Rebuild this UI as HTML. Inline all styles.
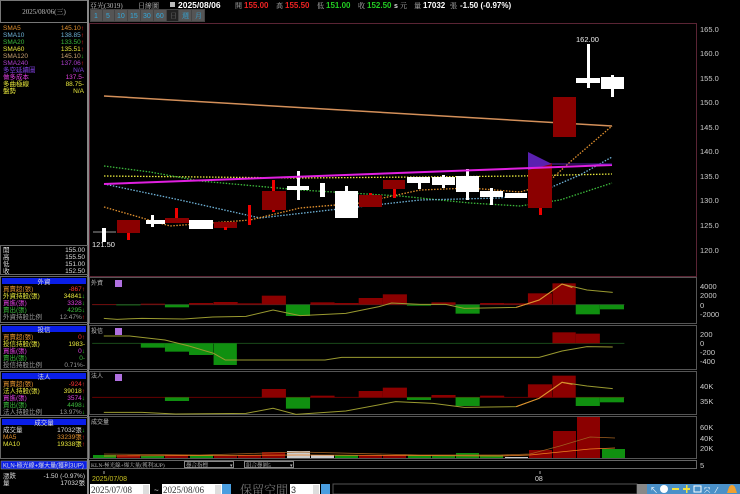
<!DOCTYPE html>
<html><head><meta charset="utf-8"><style>
html,body{margin:0;padding:0;background:#000;width:740px;height:494px;overflow:hidden}
svg{display:block}
text{font-family:"Liberation Sans","Noto Sans CJK TC",sans-serif}
.s{font-family:"Liberation Serif","Noto Serif CJK SC",serif}
</style></head><body>
<svg width="740" height="494" viewBox="0 0 740 494" xmlns="http://www.w3.org/2000/svg">
<rect width="740" height="494" fill="#000"/>
<rect x="0.5" y="0.5" width="87" height="22" fill="#000" stroke="#777"/>
<text x="44" y="14" fill="#bbb" font-size="7" text-anchor="middle" class="s">2025/08/06(三)</text>
<line x1="88" y1="0" x2="88" y2="494" stroke="#888" stroke-width="2"/>
<g font-size="6.5" class="s">
<text x="3" y="30" fill="#e0902e">SMA5</text><text x="84" y="30" fill="#e0902e" text-anchor="end">145.10<tspan fill="#f22">↑</tspan></text>
<text x="3" y="37" fill="#6fb3d8">SMA10</text><text x="84" y="37" fill="#6fb3d8" text-anchor="end">138.85<tspan fill="#f22">↑</tspan></text>
<text x="3" y="44" fill="#3cba3c">SMA20</text><text x="84" y="44" fill="#3cba3c" text-anchor="end">133.50<tspan fill="#f22">↑</tspan></text>
<text x="3" y="51" fill="#e8e83c">SMA60</text><text x="84" y="51" fill="#e8e83c" text-anchor="end">135.51<tspan fill="#f22">↑</tspan></text>
<text x="3" y="58" fill="#c8a070">SMA120</text><text x="84" y="58" fill="#c8a070" text-anchor="end">145.10<tspan fill="#2c2">↓</tspan></text>
<text x="3" y="65" fill="#b040d0">SMA240</text><text x="84" y="65" fill="#b040d0" text-anchor="end">137.06<tspan fill="#f22">↑</tspan></text>
<text x="3" y="72" fill="#8040e0">多空延續圖</text><text x="84" y="72" fill="#8040e0" text-anchor="end">N/A</text>
<text x="3" y="79" fill="#e040e0">做多成本</text><text x="84" y="79" fill="#e040e0" text-anchor="end">137.5-</text>
<text x="3" y="86" fill="#e8e83c">多曲極線</text><text x="84" y="86" fill="#e8e83c" text-anchor="end">88.75-</text>
<text x="3" y="93" fill="#e8e83c">盤勢</text><text x="84" y="93" fill="#e8e83c" text-anchor="end">N/A</text>
</g>
<rect x="0.5" y="245.5" width="87" height="29" fill="none" stroke="#666"/>
<g font-size="6.5" class="s" fill="#ddd">
<text x="3" y="252">開</text><text x="85" y="252" text-anchor="end">155.00</text>
<text x="3" y="259">高</text><text x="85" y="259" text-anchor="end">155.50</text>
<text x="3" y="266">低</text><text x="85" y="266" text-anchor="end">151.00</text>
<text x="3" y="273">收</text><text x="85" y="273" text-anchor="end">152.50</text>
</g>
<g class="s" font-size="6.5">
<rect x="0.5" y="276.5" width="87" height="46" fill="none" stroke="#666"/>
<rect x="2" y="278" width="84" height="6" fill="#0a1ee8"/><text x="44" y="284" fill="#ddd" text-anchor="middle">外資</text>
<text x="3" y="291" fill="#e0902e">買賣超(張)</text><text x="85" y="291" fill="#f33" text-anchor="end">-867↑</text>
<text x="3" y="298" fill="#e8e83c">外資持股(張)</text><text x="85" y="298" fill="#e8e83c" text-anchor="end">34841<tspan fill="#2c2">↓</tspan></text>
<text x="3" y="305" fill="#e040e0">買進(張)</text><text x="85" y="305" fill="#e040e0" text-anchor="end">3328<tspan fill="#2c2">↓</tspan></text>
<text x="3" y="312" fill="#3cba3c">賣出(張)</text><text x="85" y="312" fill="#3cba3c" text-anchor="end">4295<tspan fill="#2c2">↓</tspan></text>
<text x="3" y="319" fill="#999">外資持股比例</text><text x="85" y="319" fill="#999" text-anchor="end">12.47%<tspan fill="#f22">↑</tspan></text>

<rect x="0.5" y="324.5" width="87" height="45" fill="none" stroke="#666"/>
<rect x="2" y="326" width="84" height="6" fill="#0a1ee8"/><text x="44" y="332" fill="#ddd" text-anchor="middle">投信</text>
<text x="3" y="339" fill="#e0902e">買賣超(張)</text><text x="85" y="339" fill="#f33" text-anchor="end">0↑</text>
<text x="3" y="346" fill="#e8e83c">投信持股(張)</text><text x="85" y="346" fill="#e8e83c" text-anchor="end">1983-</text>
<text x="3" y="353" fill="#e040e0">買進(張)</text><text x="85" y="353" fill="#e040e0" text-anchor="end">0<tspan fill="#2c2">↓</tspan></text>
<text x="3" y="360" fill="#3cba3c">賣出(張)</text><text x="85" y="360" fill="#3cba3c" text-anchor="end">0-</text>
<text x="3" y="367" fill="#999">投信持股比例</text><text x="85" y="367" fill="#999" text-anchor="end">0.71%-</text>

<rect x="0.5" y="371.5" width="87" height="44" fill="none" stroke="#666"/>
<rect x="2" y="373" width="84" height="6" fill="#0a1ee8"/><text x="44" y="379" fill="#ddd" text-anchor="middle">法人</text>
<text x="3" y="386" fill="#e0902e">買賣超(張)</text><text x="85" y="386" fill="#f33" text-anchor="end">-924↑</text>
<text x="3" y="393" fill="#e8e83c">法人持股(張)</text><text x="85" y="393" fill="#e8e83c" text-anchor="end">39018<tspan fill="#f22">↑</tspan></text>
<text x="3" y="400" fill="#e040e0">買進(張)</text><text x="85" y="400" fill="#e040e0" text-anchor="end">3574<tspan fill="#2c2">↓</tspan></text>
<text x="3" y="407" fill="#3cba3c">賣出(張)</text><text x="85" y="407" fill="#3cba3c" text-anchor="end">4498<tspan fill="#2c2">↓</tspan></text>
<text x="3" y="414" fill="#999">法人持股比例</text><text x="85" y="414" fill="#999" text-anchor="end">13.97%<tspan fill="#2c2">↓</tspan></text>

<rect x="0.5" y="417.5" width="87" height="41" fill="none" stroke="#666"/>
<rect x="2" y="419" width="84" height="6" fill="#0a1ee8"/><text x="44" y="425" fill="#ddd" text-anchor="middle">成交量</text>
<text x="3" y="432" fill="#ddd">成交量</text><text x="85" y="432" fill="#ddd" text-anchor="end">17032張<tspan fill="#2c2">↓</tspan></text>
<text x="3" y="439" fill="#e0902e">MA5</text><text x="85" y="439" fill="#e0902e" text-anchor="end">33239張<tspan fill="#f22">↑</tspan></text>
<text x="3" y="446" fill="#e8e83c">MA10</text><text x="85" y="446" fill="#e8e83c" text-anchor="end">19338張<tspan fill="#f22">↑</tspan></text>

<rect x="1" y="461" width="86" height="8" fill="#0a1ee8" stroke="#888" stroke-width="0.6"/>
<text x="3" y="467.5" fill="#ddd" font-size="6">KLN-極光線+爆大量(獲利3UP)</text>
<text x="3" y="478" fill="#ddd">漲跌</text><text x="85" y="478" fill="#ddd" text-anchor="end">-1.50 (-0.97%)</text>
<text x="3" y="485" fill="#ddd">量</text><text x="85" y="485" fill="#ddd" text-anchor="end">17032張</text>
</g>

<g font-size="7">
<text x="90" y="8" fill="#bbb" class="s">亞光(3019)</text>
<text x="138" y="8" fill="#bbb" class="s">日線圖</text>
<rect x="170" y="2" width="5" height="5" fill="#bbb"/>
<text x="178" y="8" fill="#fff" font-weight="bold" font-size="8.5">2025/08/06</text>
<text x="235" y="8" fill="#bbb" class="s">開</text><text x="244" y="8" fill="#e22" font-weight="bold" font-size="8">155.00</text>
<text x="276" y="8" fill="#bbb" class="s">高</text><text x="285" y="8" fill="#e22" font-weight="bold" font-size="8">155.50</text>
<text x="317" y="8" fill="#bbb" class="s">低</text><text x="326" y="8" fill="#2c2" font-weight="bold" font-size="8">151.00</text>
<text x="358" y="8" fill="#bbb" class="s">收</text><text x="367" y="8" fill="#2c2" font-weight="bold" font-size="8">152.50</text>
<text x="394" y="8" fill="#ddd" font-weight="bold">s</text><text x="400" y="8" fill="#bbb" class="s">元</text>
<text x="414" y="8" fill="#bbb" class="s">量</text><text x="423" y="8" fill="#fff" font-weight="bold" font-size="8">17032</text><text x="450" y="8" fill="#bbb" class="s">張</text>
<text x="460" y="8" fill="#fff" font-weight="bold" font-size="8">-1.50 (-0.97%)</text>
</g>
<g font-size="7" fill="#3ad">
<rect x="90" y="9" width="115" height="13" fill="#444"/>
<rect x="91" y="10" width="11" height="11" fill="#555"/><text x="94" y="18">1</text>
<rect x="103" y="10" width="11" height="11" fill="#555"/><text x="106" y="18">5</text>
<rect x="115" y="10" width="12" height="11" fill="#555"/><text x="117" y="18">10</text>
<rect x="128" y="10" width="12" height="11" fill="#555"/><text x="130" y="18">15</text>
<rect x="141" y="10" width="12" height="11" fill="#555"/><text x="143" y="18">30</text>
<rect x="154" y="10" width="12" height="11" fill="#555"/><text x="156" y="18">60</text>
<rect x="167" y="10" width="11" height="11" fill="#222"/><text x="170" y="18" fill="#666" class="s">日</text>
<rect x="179" y="10" width="12" height="11" fill="#555"/><text x="182" y="18" class="s">週</text>
<rect x="192" y="10" width="12" height="11" fill="#555"/><text x="195" y="18" class="s">月</text>
</g>

<rect x="89.5" y="23.5" width="607" height="253" fill="none" stroke="#5a2434"/>
<g font-size="7.5" fill="#ccc">
<text x="700" y="32">165.0</text><text x="700" y="56">160.0</text><text x="700" y="81">155.0</text><text x="700" y="105">150.0</text><text x="700" y="130">145.0</text><text x="700" y="154">140.0</text><text x="700" y="179">135.0</text><text x="700" y="203">130.0</text><text x="700" y="228">125.0</text><text x="700" y="253">120.0</text>
</g>
<line x1="104" y1="96" x2="612" y2="126" stroke="#d4905a" stroke-width="1.5"/>
<polyline points="104,176 300,178 420,177 520,176 612,174" fill="none" stroke="#e8e83c" stroke-width="1.3" stroke-dasharray="1.5,1.5"/>
<polyline points="104,166 150,172 200,181 300,190 400,196 470,203 520,206 560,200 612,183" fill="none" stroke="#3cba3c" stroke-width="1.3" stroke-dasharray="1.5,1.5"/>
<polyline points="104,184 180,200 260,218 330,210 420,200 500,198 540,192 580,175 612,157" fill="none" stroke="#6fb3d8" stroke-width="1.3" stroke-dasharray="1.5,1.5"/>
<polyline points="104,207 170,226 250,220 300,208 360,203 420,190 470,188 520,192 545,185 570,162 612,126" fill="none" stroke="#e0902e" stroke-width="1.3" stroke-dasharray="1.5,1.5"/>
<g>
<line x1="93" y1="232" x2="116" y2="232" stroke="#999"/>
<rect x="102" y="228" width="4" height="14" fill="#fff"/>
<text x="92" y="247" fill="#eee" font-size="7.5">121.50</text>
<rect x="127" y="232" width="3" height="8" fill="#e00"/><rect x="117" y="220" width="23" height="13" fill="#8b0000"/>
<rect x="151" y="215" width="3" height="12" fill="#fff"/><rect x="146" y="220" width="19" height="4" fill="#fff"/>
<rect x="175" y="208" width="3" height="10" fill="#e00"/><rect x="165" y="218" width="24" height="5" fill="#8b0000"/>
<rect x="189" y="220" width="24" height="9" fill="#fff"/>
<rect x="214" y="222" width="23" height="6" fill="#8b0000"/><rect x="224" y="227" width="3" height="3" fill="#e00"/>
<rect x="248" y="205" width="3" height="20" fill="#e00"/>
<rect x="272" y="180" width="3" height="32" fill="#e00"/><rect x="262" y="191" width="24" height="19" fill="#8b0000"/>
<rect x="297" y="171" width="3" height="29" fill="#fff"/><rect x="287" y="186" width="22" height="4" fill="#fff"/>
<rect x="320" y="183" width="5" height="14" fill="#fff"/>
<rect x="345" y="186" width="3" height="6" fill="#fff"/><rect x="335" y="191" width="23" height="27" fill="#fff"/>
<rect x="369" y="193" width="3" height="4" fill="#e00"/><rect x="359" y="195" width="23" height="12" fill="#8b0000"/>
<rect x="393" y="186" width="3" height="12" fill="#e00"/><rect x="383" y="180" width="22" height="9" fill="#8b0000"/>
<rect x="418" y="183" width="3" height="6" fill="#fff"/><rect x="407" y="177" width="23" height="6" fill="#fff"/>
<rect x="442" y="175" width="3" height="13" fill="#fff"/><rect x="432" y="177" width="23" height="8" fill="#fff"/>
<rect x="466" y="169" width="3" height="31" fill="#fff"/><rect x="456" y="176" width="23" height="16" fill="#fff"/>
<rect x="490" y="188" width="3" height="17" fill="#fff"/><rect x="480" y="191" width="23" height="6" fill="#fff"/>
<rect x="505" y="193" width="22" height="5" fill="#fff"/>
<rect x="539" y="200" width="3" height="15" fill="#e00"/><rect x="528" y="163" width="24" height="45" fill="#8b0000"/>
<polygon points="528,152 552,164 528,170" fill="#5a20b0"/>
<rect x="553" y="97" width="23" height="40" fill="#8b0000"/>
<rect x="587" y="44" width="3" height="44" fill="#fff"/><rect x="576" y="78" width="24" height="5" fill="#fff"/>
<text x="576" y="42" fill="#eee" font-size="7.5">162.00</text>
<rect x="611" y="75" width="3" height="22" fill="#fff"/><rect x="601" y="77" width="23" height="12" fill="#fff"/>
</g>
<line x1="104" y1="184" x2="612" y2="165" stroke="#e020e0" stroke-width="2"/>
<line x1="552" y1="164" x2="612" y2="164" stroke="#5a20b0" stroke-width="1"/>

<g stroke="#555" fill="none">
<rect x="89.5" y="277.5" width="607" height="46"/>
<rect x="89.5" y="325.5" width="607" height="44"/>
<rect x="89.5" y="371.5" width="607" height="43"/>
<rect x="89.5" y="416.5" width="607" height="42"/>
</g>
<g font-size="6" fill="#bbb" class="s">
<text x="91" y="285">外資</text><rect x="115" y="280" width="7" height="7" fill="#b070e0"/>
<text x="91" y="333">投信</text><rect x="115" y="328" width="7" height="7" fill="#b070e0"/>
<text x="91" y="378">法人</text><rect x="115" y="374" width="7" height="7" fill="#b070e0"/>
<text x="91" y="424">成交量</text>
</g>
<g font-size="7.5" fill="#ccc">
<text x="700" y="289">4000</text><text x="700" y="298">2000</text><text x="700" y="308">0</text><text x="700" y="317">-2000</text>
<text x="700" y="337">200</text><text x="700" y="346">0</text><text x="700" y="355">-200</text><text x="700" y="364">-400</text>
<text x="700" y="389">40K</text><text x="700" y="404">35K</text>
<text x="700" y="430">60K</text><text x="700" y="441">40K</text><text x="700" y="451">20K</text>
<text x="700" y="468">5</text>
</g>
<g transform="translate(88,275) scale(0.4158,0.3333)">
<line x1="10" y1="89" x2="1290" y2="89" stroke="#333" vector-effect="non-scaling-stroke"/>
<g fill="#8b0000">
<rect x="10" y="88" width="58" height="2"/><rect x="127" y="86" width="58" height="3"/><rect x="243" y="84" width="58" height="5"/><rect x="302" y="81" width="58" height="8"/><rect x="360" y="85" width="58" height="4"/><rect x="418" y="62" width="58" height="27"/><rect x="535" y="82" width="58" height="7"/><rect x="593" y="84" width="58" height="5"/><rect x="651" y="69" width="58" height="20"/><rect x="709" y="58" width="58" height="31"/><rect x="826" y="82" width="58" height="7"/><rect x="943" y="84" width="58" height="5"/><rect x="1001" y="85" width="58" height="4"/><rect x="1058" y="55" width="58" height="34"/><rect x="1117" y="25" width="56" height="64"/>
</g>
<g fill="#109010">
<rect x="68" y="89" width="58" height="2"/><rect x="185" y="89" width="58" height="8"/><rect x="476" y="89" width="58" height="34"/><rect x="767" y="89" width="58" height="3"/><rect x="884" y="89" width="58" height="27"/><rect x="1173" y="89" width="58" height="29"/><rect x="1231" y="89" width="58" height="14"/>
</g>
<polyline points="38,130 70,133 130,130 230,132 300,126 380,124 445,105 510,122 620,115 700,95 730,84 800,88 860,88 905,100 1000,98 1030,97 1085,75 1140,27 1200,45 1262,52" fill="none" stroke="#9a9a30" stroke-width="1" vector-effect="non-scaling-stroke"/>
<polyline points="1030,97 1085,75 1140,27 1165,38" fill="none" stroke="#e0902e" stroke-width="1" vector-effect="non-scaling-stroke"/>
</g>
<g transform="translate(88,275) scale(0.4158,0.3333)">
<line x1="10" y1="205" x2="1290" y2="205" stroke="#1a4a1a" vector-effect="non-scaling-stroke"/>
<g fill="#109010"><rect x="127" y="205" width="58" height="13"/><rect x="185" y="205" width="58" height="25"/><rect x="243" y="205" width="58" height="35"/><rect x="302" y="205" width="56" height="65"/></g>
<g fill="#8b0000"><rect x="1117" y="172" width="56" height="33"/><rect x="1173" y="176" width="58" height="29"/></g>
<polyline points="38,183 100,183 185,195 243,213 302,235 330,255 570,255 610,247 1085,247 1140,228 1200,215 1262,216" fill="none" stroke="#9a9a30" vector-effect="non-scaling-stroke"/>
</g>
<g transform="translate(88,275) scale(0.4158,0.3333)">
<line x1="10" y1="367" x2="1290" y2="367" stroke="#600" vector-effect="non-scaling-stroke"/>
<g fill="#8b0000"><rect x="418" y="342" width="58" height="25"/><rect x="535" y="362" width="58" height="5"/><rect x="651" y="348" width="58" height="19"/><rect x="709" y="338" width="58" height="29"/><rect x="826" y="360" width="58" height="7"/><rect x="943" y="362" width="58" height="5"/><rect x="1058" y="328" width="58" height="39"/><rect x="1117" y="302" width="56" height="65"/></g>
<g fill="#109010"><rect x="185" y="367" width="58" height="11"/><rect x="476" y="367" width="58" height="34"/><rect x="767" y="367" width="58" height="8"/><rect x="884" y="367" width="58" height="26"/><rect x="1173" y="367" width="58" height="26"/><rect x="1231" y="367" width="58" height="15"/></g>
<polyline points="38,412 130,412 210,417 380,415 445,400 500,418 620,408 740,380 830,385 905,397 1030,395 1085,370 1140,322 1200,333 1262,341" fill="none" stroke="#9a9a30" vector-effect="non-scaling-stroke"/>
<polyline points="1030,395 1085,370 1140,322 1165,328" fill="none" stroke="#e0902e" vector-effect="non-scaling-stroke"/>
</g>
<g>
<g fill="#109010"><rect x="93" y="455" width="23" height="3"/><rect x="141" y="456" width="23" height="2"/><rect x="190" y="455" width="23" height="3"/><rect x="335" y="455" width="23" height="3"/><rect x="408" y="455" width="23" height="3"/><rect x="432" y="455" width="23" height="3"/><rect x="456" y="453" width="23" height="5"/><rect x="480" y="455" width="23" height="3"/><rect x="602" y="449" width="23" height="9"/></g>
<g fill="#8b0000"><rect x="117" y="455" width="23" height="3"/><rect x="165" y="455" width="23" height="3"/><rect x="214" y="456" width="23" height="2"/><rect x="238" y="455" width="23" height="3"/><rect x="262" y="452" width="23" height="6"/><rect x="359" y="455" width="23" height="3"/><rect x="383" y="455" width="23" height="3"/><rect x="529" y="450" width="23" height="8"/><rect x="553" y="431" width="23" height="27"/><rect x="577" y="417" width="23" height="41"/></g>
<g fill="#ccc"><rect x="287" y="451" width="23" height="7"/><rect x="311" y="455" width="23" height="3"/><rect x="505" y="457" width="23" height="1"/></g>
<polyline points="104,454 200,455 300,452 420,455 500,455 530,454 560,446 590,437 615,438" fill="none" stroke="#a06020" stroke-width="0.8"/>
<polyline points="104,456 300,455 500,456 530,455 560,452 590,449 615,448" fill="none" stroke="#f08020" stroke-width="0.8"/>
</g>
<rect x="89.5" y="460.5" width="607" height="8" fill="none" stroke="#666"/>
<text x="91" y="467" fill="#bbb" font-size="5.5" class="s">KLN-極光線+爆大量(獲利3UP)</text>
<rect x="184.5" y="461.5" width="49" height="6" fill="none" stroke="#888"/><text x="186" y="467" fill="#bbb" font-size="5.5" class="s">疊合指標</text><text x="230" y="467" fill="#bbb" font-size="5">▾</text>
<rect x="244.5" y="461.5" width="49" height="6" fill="none" stroke="#888"/><text x="246" y="467" fill="#bbb" font-size="5.5" class="s">組合疊圖5</text><text x="290" y="467" fill="#bbb" font-size="5">▾</text>
<line x1="104" y1="471" x2="104" y2="474" stroke="#aaa"/><text x="92" y="481" fill="#c8c020" font-size="7">2025/07/08</text>
<line x1="540" y1="471" x2="540" y2="474" stroke="#aaa"/><text x="535" y="481" fill="#ddd" font-size="7">08</text>
<rect x="90" y="484" width="60" height="10" fill="#fff"/><text x="91" y="493" fill="#333" font-size="9" class="s">2025/07/08</text>
<rect x="143" y="485" width="6" height="9" fill="#ddd"/>
<text x="154" y="493" fill="#ddd" font-size="8">~</text>
<rect x="162" y="484" width="60" height="10" fill="#fff"/><text x="163" y="493" fill="#333" font-size="9" class="s">2025/08/06</text>
<rect x="215" y="485" width="6" height="9" fill="#ddd"/>
<rect x="222" y="484" width="9" height="10" fill="#4a9ee0"/>
<text x="240" y="494" fill="#777" font-size="12" class="s">保留空間</text>
<rect x="290" y="484" width="30" height="10" fill="#fff"/><text x="291" y="493" fill="#333" font-size="9">3</text>
<rect x="313" y="485" width="6" height="9" fill="#ddd"/>
<rect x="321" y="484" width="9" height="10" fill="#4a9ee0"/>
<rect x="333" y="484" width="304" height="10" fill="#000" stroke="#555"/>
<rect x="637" y="484" width="103" height="10" fill="#4a90c8"/>
<rect x="637" y="484" width="10" height="10" fill="#888"/>
<g fill="#fff" font-size="8"><text x="650" y="493">↖</text><circle cx="664" cy="489" r="4"/><rect x="672" y="488" width="7" height="2" fill="#f0e040"/><rect x="683" y="488" width="7" height="2" fill="#f0e040"/><rect x="686" y="485" width="1.5" height="8" fill="#f0e040"/><rect x="694" y="486" width="7" height="6" fill="none" stroke="#fff"/><text x="704" y="493">⤧</text><text x="716" y="493">⁄</text></g>
<path d="M727 493 L729 487 Q732 483 735 487 L737 493 Z" fill="#f0a030"/>
</svg>
</body></html>
